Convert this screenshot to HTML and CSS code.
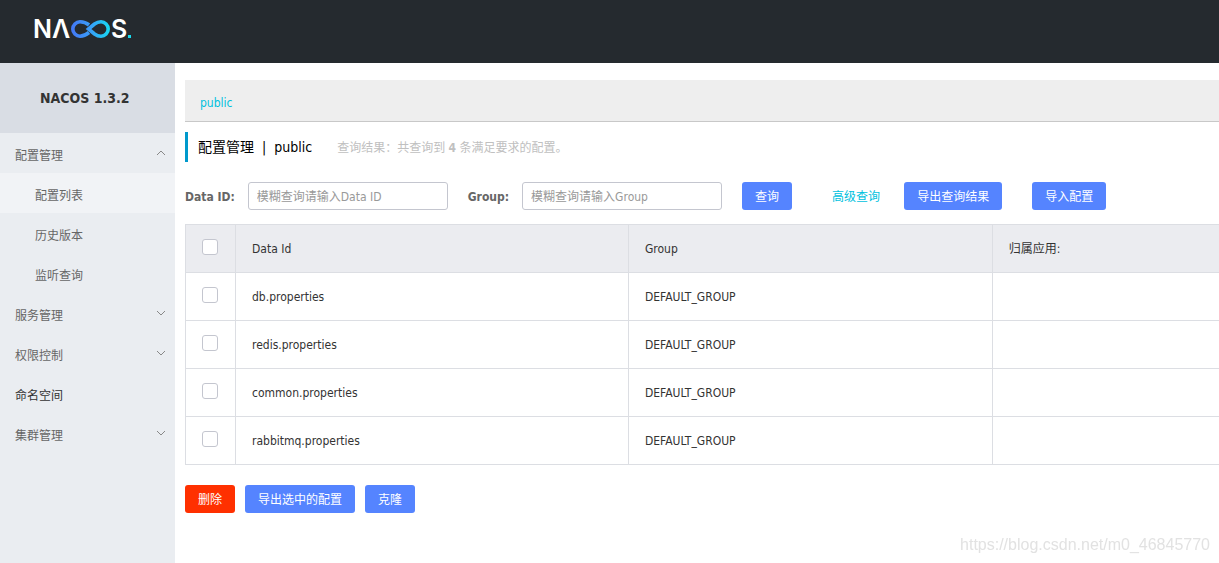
FILE: index.html
```html
<!DOCTYPE html>
<html lang="zh-CN">
<head>
<meta charset="utf-8">
<title>Nacos</title>
<link rel="stylesheet" href="styles.css">
</head>
<body>
<header class="topbar">
  <svg class="logo" width="100" height="26" viewBox="0 0 100 26" role="img" aria-label="NACOS">
    <defs>
      <linearGradient id="loop" gradientUnits="userSpaceOnUse" x1="37" y1="0" x2="76" y2="0">
        <stop offset="0" stop-color="#4378f5"/>
        <stop offset="0.45" stop-color="#3a9cf8"/>
        <stop offset="1" stop-color="#14dcf2"/>
      </linearGradient>
    </defs>
    <text class="logo-text" x="-2" y="22">N</text>
    <text class="logo-text" x="17" y="22">Λ</text>
    <path fill="none" stroke="url(#loop)" stroke-width="3.600" d="M54 9C51 6.500 49 5.800 45 5.800A7.200 7.200 0 0 0 45 20.200C49 20.200 51 19 54 16.500"/>
    <path fill="none" stroke="url(#loop)" stroke-width="3.600" d="M53.500 13L59.500 8C62 6.200 64 5.800 66 5.800A7.200 7.200 0 0 1 66 20.200C64 20.200 62 19.800 59.500 18Z"/>
    <text class="logo-text" x="76" y="22">S</text>
    <rect x="93" y="19" width="3" height="3" fill="#16dcf0"/>
  </svg>
</header>
<div class="shell">
  <aside class="sidebar">
    <h1 class="product">NACOS 1.3.2</h1>
    <nav class="menu">
      <a class="item" href="#">配置管理<svg class="arrow" viewBox="0 0 10 6"><path d="M1 5L5 1L9 5"/></svg></a>
      <a class="item sub active" href="#">配置列表</a>
      <a class="item sub" href="#">历史版本</a>
      <a class="item sub" href="#">监听查询</a>
      <a class="item" href="#">服务管理<svg class="arrow" viewBox="0 0 10 6"><path d="M1 1L5 5L9 1"/></svg></a>
      <a class="item" href="#">权限控制<svg class="arrow" viewBox="0 0 10 6"><path d="M1 1L5 5L9 1"/></svg></a>
      <a class="item plain" href="#">命名空间</a>
      <a class="item" href="#">集群管理<svg class="arrow" viewBox="0 0 10 6"><path d="M1 1L5 5L9 1"/></svg></a>
    </nav>
  </aside>
  <main class="content">
    <div class="namespaces"><a class="link" href="#">public</a></div>
    <div class="heading">
      <h2 class="title"><span>配置管理</span><span>|</span><span>public</span></h2>
      <p class="result">查询结果：共查询到 <strong>4</strong> 条满足要求的配置。</p>
    </div>
    <form class="search">
      <label class="label" for="data-id">Data ID:</label>
      <input class="field" id="data-id" type="text" placeholder="模糊查询请输入Data ID">
      <label class="label" for="group">Group:</label>
      <input class="field" id="group" type="text" placeholder="模糊查询请输入Group">
      <button class="btn" type="button">查询</button>
      <a class="link advanced" href="#">高级查询</a>
      <button class="btn" type="button">导出查询结果</button>
      <button class="btn import" type="button">导入配置</button>
    </form>
    <table class="configs">
      <colgroup><col class="c-check"><col class="c-id"><col class="c-group"><col></colgroup>
      <thead>
        <tr><th><input class="check" type="checkbox" aria-label="全选"></th><th>Data Id</th><th>Group</th><th>归属应用:</th></tr>
      </thead>
      <tbody>
        <tr><td><input class="check" type="checkbox" aria-label="db.properties"></td><td>db.properties</td><td>DEFAULT_GROUP</td><td></td></tr>
        <tr><td><input class="check" type="checkbox" aria-label="redis.properties"></td><td>redis.properties</td><td>DEFAULT_GROUP</td><td></td></tr>
        <tr><td><input class="check" type="checkbox" aria-label="common.properties"></td><td>common.properties</td><td>DEFAULT_GROUP</td><td></td></tr>
        <tr><td><input class="check" type="checkbox" aria-label="rabbitmq.properties"></td><td>rabbitmq.properties</td><td>DEFAULT_GROUP</td><td></td></tr>
      </tbody>
    </table>
    <div class="actions">
      <button class="btn danger" type="button">删除</button>
      <button class="btn" type="button">导出选中的配置</button>
      <button class="btn" type="button">克隆</button>
    </div>
  </main>
</div>
<div class="watermark">https://blog.csdn.net/m0_46845770</div>
</body>
</html>
```
FILE: styles.css
```css
* { box-sizing: border-box; }
body {
  margin: 0;
  min-height: 100vh;
  display: flex;
  flex-direction: column;
  background: #fff;
  color: #333;
  font: 12px/20px "DejaVu Sans Condensed", "Noto Sans CJK SC", sans-serif;
}
a { text-decoration: none; }
h1, h2, p { margin: 0; font-weight: normal; }
button, input { font: inherit; }
.topbar { height: 63px; padding: 16px 35px; background: #252a2f; }
.logo { display: block; overflow: visible; }
.logo-text { font: 600 25px Inter, sans-serif; fill: #fff; }
.shell { flex: 1; display: flex; }
.sidebar { flex: 0 0 175px; background: #eaedf1; }
.product {
  padding: 25px 40px;
  background: #d9dde4;
  font-size: 14px;
  font-weight: bold;
  white-space: nowrap;
}
.item {
  display: flex;
  justify-content: space-between;
  align-items: center;
  height: 40px;
  padding: 6px 9px 0 15px;
  color: #666;
}
.sub { padding-left: 35px; }
.active { background: #f1f3f6; }
.plain { color: #333; }
.arrow {
  width: 10px;
  height: 6px;
  margin-bottom: 6px;
  fill: none;
  stroke: #888;
}
.content { flex: 1; min-width: 0; padding: 17px 0 0 10px; }
.link { color: #00c1de; }
.namespaces {
  padding: 13px 15px 8px;
  background: #eee;
  border-bottom: 1px solid #c8c8c8;
}
.heading {
  display: flex;
  align-items: center;
  gap: 25px;
  height: 30px;
  margin: 10px 0 20px;
  padding-left: 10px;
  border-left: 3px solid #09c;
}
.title { display: flex; gap: 8px; font-size: 14px; color: #000; }
.result { padding-top: 2px; color: #c0c0c0; }
.search { display: flex; align-items: center; height: 28px; }
.label { margin-right: 13px; padding-top: 2px; color: #666; font-weight: bold; white-space: nowrap; }
.field {
  width: 200px;
  height: 28px;
  margin-right: 20px;
  padding: 2px 8px 0;
  border: 1px solid #c4c6cf;
  border-radius: 3px;
}
.field::placeholder { color: #999; }
.btn {
  height: 28px;
  padding: 2px 13px 0;
  border: 0;
  border-radius: 3px;
  background: #5584ff;
  color: #fff;
  white-space: nowrap;
}
.advanced { margin: 0 24px 0 40px; padding-top: 2px; }
.import { margin-left: 30px; }
.configs {
  width: 100%;
  margin-top: 14px;
  table-layout: fixed;
  border-collapse: separate;
  border-spacing: 0;
  border-top: 1px solid #dcdee3;
}
.c-check { width: 50px; }
.c-id { width: 38%; }
.c-group { width: 35.2%; }
.configs th, .configs td {
  height: 48px;
  padding: 0 16px;
  border-bottom: 1px solid #dcdee3;
  border-left: 1px solid #dcdee3;
  text-align: left;
  font-weight: normal;
}
.configs th { background: #ebecf0; }
.check {
  appearance: none;
  display: block;
  width: 16px;
  height: 16px;
  margin: 0 0 3px;
  border: 1px solid #c4c6cf;
  border-radius: 3px;
  background: #fff;
}
.actions { display: flex; gap: 10px; padding-top: 20px; }
.danger { background: #ff3000; }
.watermark {
  position: fixed;
  right: 9px;
  bottom: 8px;
  color: #e2e2e2;
  font: 16px/20px "Liberation Sans", sans-serif;
}
```
